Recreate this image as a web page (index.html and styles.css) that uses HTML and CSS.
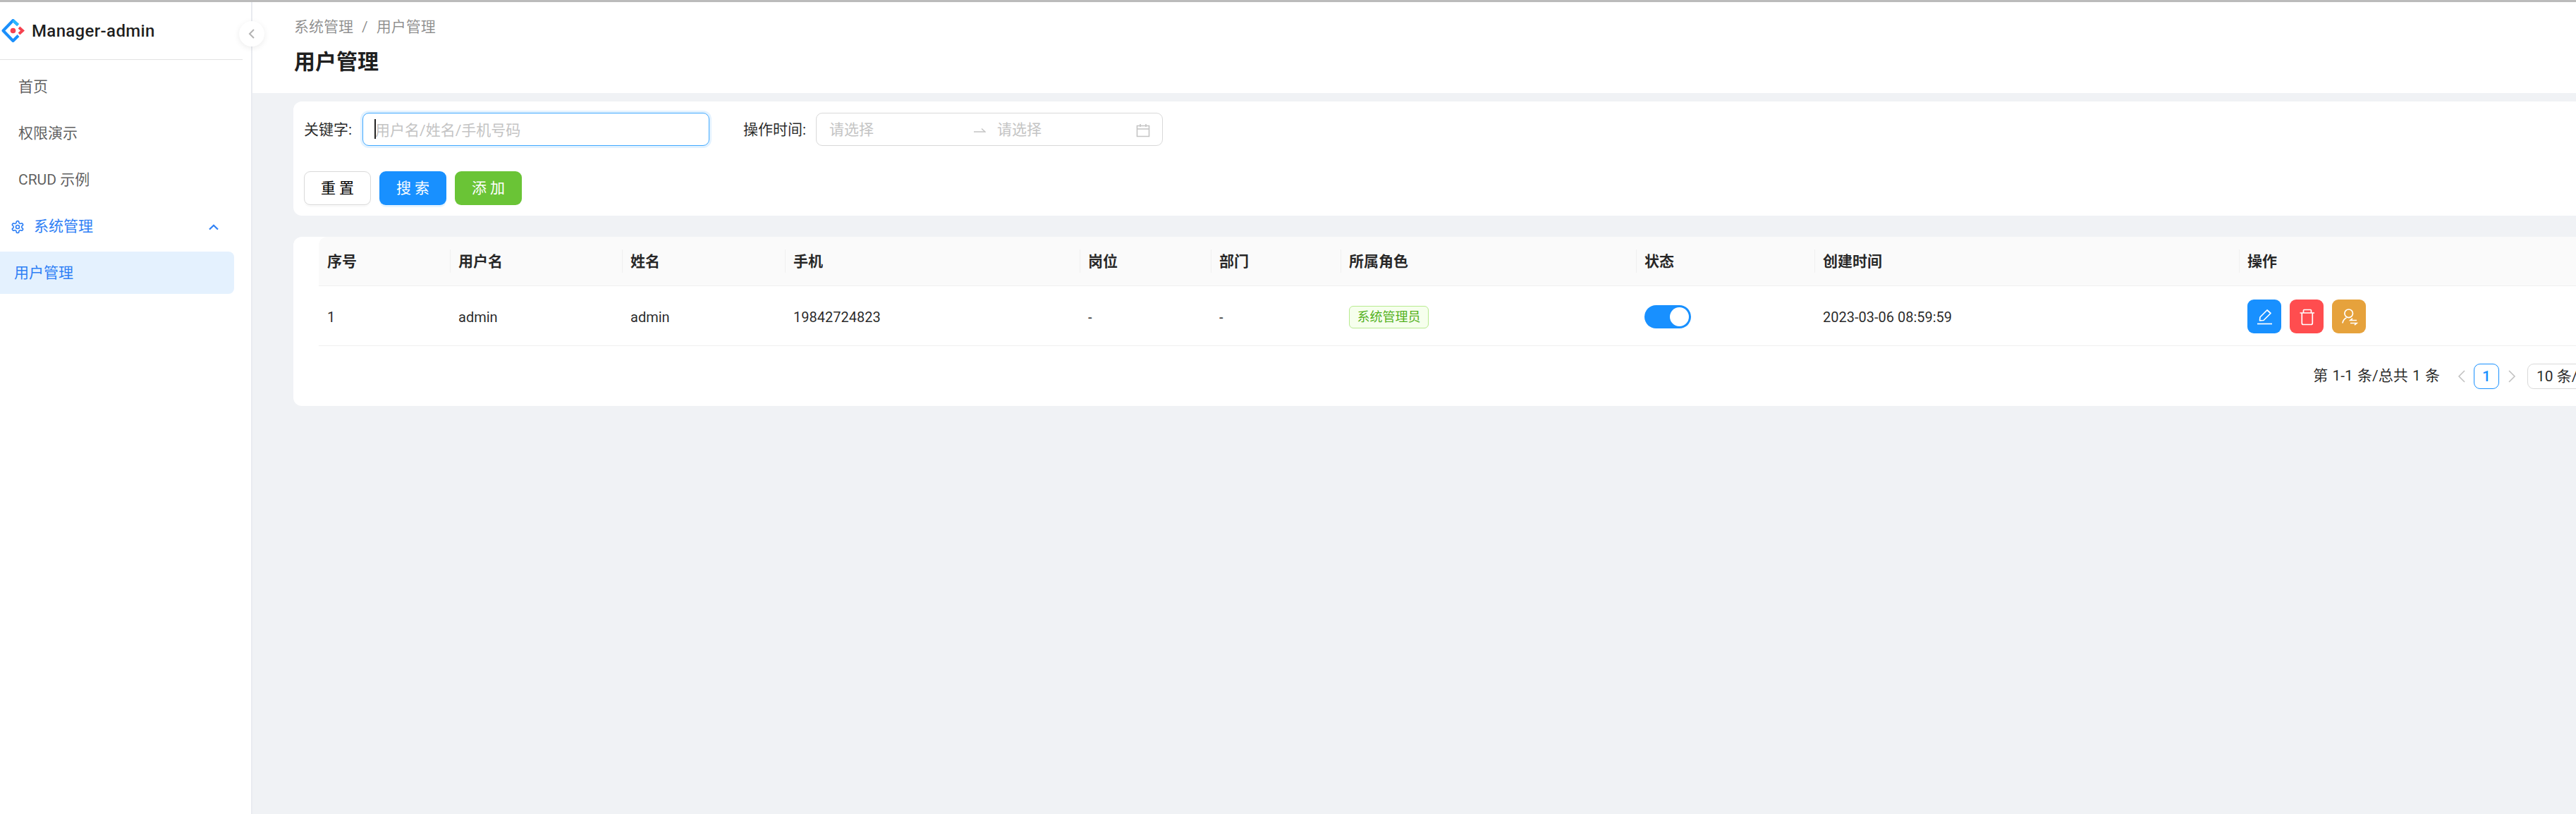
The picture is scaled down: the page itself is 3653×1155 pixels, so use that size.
FILE: index.html
```html
<!DOCTYPE html>
<html>
<head>
    <title>Manager-admin</title>
    <link rel="stylesheet" href="styles.css">
</head>
<body>
    <div class="layout">
        <aside class="sidebar">
            <div class="logo">
                <svg class="logo-icon" viewBox="0 0 33 33" fill="none">
                    <path d="M23.5 8.5 16.5 2 2.5 16.5 16.5 31 24 23.5" stroke="#1b8ffb" stroke-width="4" stroke-linejoin="round"/>
                    <path d="M16.5 2 23.5 8.5" stroke="#29b8ff" stroke-width="4"/>
                    <path d="M25 12 30 16.5 25 21" stroke="#f5414f" stroke-width="4"/>
                    <circle cx="16.5" cy="16.5" r="3.8" fill="#f5414f"/>
                </svg>
                <span class="logo-text">Manager-admin</span>
            </div>
            <nav class="menu">
                <div class="menu-item">首页</div>
                <div class="menu-item">权限演示</div>
                <div class="menu-item">CRUD 示例</div>
                <div class="menu-item menu-group">
                    <svg class="gear-icon" viewBox="0 0 24 24" fill="none" stroke="currentColor" stroke-width="2">
                        <path d="M12.22 2h-.44a2 2 0 0 0-2 2v.18a2 2 0 0 1-1 1.73l-.43.25a2 2 0 0 1-2 0l-.15-.08a2 2 0 0 0-2.73.73l-.22.38a2 2 0 0 0 .73 2.73l.15.1a2 2 0 0 1 1 1.72v.51a2 2 0 0 1-1 1.74l-.15.09a2 2 0 0 0-.73 2.73l.22.38a2 2 0 0 0 2.73.73l.15-.08a2 2 0 0 1 2 0l.43.25a2 2 0 0 1 1 1.73V20a2 2 0 0 0 2 2h.44a2 2 0 0 0 2-2v-.18a2 2 0 0 1 1-1.73l.43-.25a2 2 0 0 1 2 0l.15.08a2 2 0 0 0 2.73-.73l.22-.39a2 2 0 0 0-.73-2.73l-.15-.08a2 2 0 0 1-1-1.74v-.5a2 2 0 0 1 1-1.74l.15-.09a2 2 0 0 0 .73-2.73l-.22-.38a2 2 0 0 0-2.73-.73l-.15.08a2 2 0 0 1-2 0l-.43-.25a2 2 0 0 1-1-1.73V4a2 2 0 0 0-2-2z"/>
                        <circle cx="12" cy="12" r="3"/>
                    </svg>
                    <span class="group-title">系统管理</span>
                    <svg class="group-arrow" viewBox="0 0 14 9" fill="none" stroke="currentColor" stroke-width="2.2">
                        <path d="M1 7.5 7 1.8l6 5.7"/>
                    </svg>
                </div>
                <div class="menu-item menu-sub active">用户管理</div>
            </nav>
            <button class="collapse-btn">
                <svg viewBox="0 0 10 14" fill="none" stroke="#b3b3b3" stroke-width="2"><path d="M8 1 2 7l6 6"/></svg>
            </button>
        </aside>

        <main class="main">
            <header class="page-header">
                <div class="breadcrumb">系统管理<span class="crumb-sep">/</span>用户管理</div>
                <h1 class="page-title">用户管理</h1>
            </header>

            <div class="content">
                <section class="card filter-card">
                    <div class="filter-row">
                        <label class="filter-label">关键字:</label>
                        <div class="keyword-input">
                            <input type="text" placeholder="用户名/姓名/手机号码">
                        </div>
                        <label class="filter-label date-label">操作时间:</label>
                        <div class="date-range">
                            <span class="date-start">请选择</span>
                            <svg class="date-arrow" viewBox="0 0 17 8" fill="none" stroke="#c4c4c4" stroke-width="1.5"><path d="M0 6h16L11 1.5"/></svg>
                            <span class="date-end">请选择</span>
                            <svg class="date-icon" viewBox="0 0 20 20" fill="none" stroke="#c4c4c4" stroke-width="1.6"><path d="M1.5 3.5h17v15h-17zM1.5 8h17M6 1v4M14 1v4"/></svg>
                        </div>
                    </div>
                    <div class="button-row">
                        <button class="btn btn-default">重 置</button>
                        <button class="btn btn-primary">搜 索</button>
                        <button class="btn btn-success">添 加</button>
                    </div>
                </section>

                <section class="card table-card">
                    <table class="user-table">
                        <colgroup>
                            <col class="col-index">
                            <col class="col-username">
                            <col class="col-name">
                            <col class="col-phone">
                            <col class="col-post">
                            <col class="col-dept">
                            <col class="col-role">
                            <col class="col-status">
                            <col class="col-time">
                            <col>
                        </colgroup>
                        <thead>
                            <tr>
                                <th>序号</th>
                                <th>用户名</th>
                                <th>姓名</th>
                                <th>手机</th>
                                <th>岗位</th>
                                <th>部门</th>
                                <th>所属角色</th>
                                <th>状态</th>
                                <th>创建时间</th>
                                <th>操作</th>
                            </tr>
                        </thead>
                        <tbody>
                            <tr>
                                <td>1</td>
                                <td>admin</td>
                                <td>admin</td>
                                <td>19842724823</td>
                                <td>-</td>
                                <td>-</td>
                                <td><span class="tag">系统管理员</span></td>
                                <td><span class="switch"><span class="switch-knob"></span></span></td>
                                <td>2023-03-06 08:59:59</td>
                                <td>
                                    <div class="actions">
                                        <button class="action-btn action-edit">
                                            <svg viewBox="0 0 48 48" fill="none" stroke="#fff" stroke-width="1.7"><path d="M14 34.500h21"/><path d="M17.500 29.800 18 25 28 15l5 4.500-10 10z" stroke-linejoin="round"/></svg>
                                        </button>
                                        <button class="action-btn action-delete">
                                            <svg viewBox="0 0 48 48" fill="none" stroke="#fff" stroke-width="1.7"><path d="M14.500 19h20.500M19.500 19v-3.500q0-1 1-1h9q1 0 1 1V19M17.300 19v14.500q0 2 2 2h11q2 0 2-2V19"/></svg>
                                        </button>
                                        <button class="action-btn action-user">
                                            <svg viewBox="0 0 48 48" fill="none" stroke="#fff" stroke-width="1.7"><circle cx="23.700" cy="19.800" r="5.800"/><path d="M15 33.500c.5-3.500 2.500-6.200 5.500-7.500"/><path d="M35 29.500h-9l3-2.700M26 33.500h9l-3 2.700"/></svg>
                                        </button>
                                    </div>
                                </td>
                            </tr>
                        </tbody>
                    </table>
                    <div class="pagination">
                        <span class="page-total">第 1-1 条/总共 1 条</span>
                        <svg class="page-arrow" viewBox="0 0 11 18" fill="none" stroke="#bfbfbf" stroke-width="1.5"><path d="M10 1 2 9l8 8"/></svg>
                        <span class="page-num">1</span>
                        <svg class="page-arrow" viewBox="0 0 11 18" fill="none" stroke="#bfbfbf" stroke-width="1.5"><path d="m1 1 8 8-8 8"/></svg>
                        <span class="page-size">10 条/页</span>
                    </div>
                </section>
            </div>
        </main>
    </div>
</body>
</html>
```

FILE: styles.css
```css
* {
    box-sizing: border-box;
}

html, body {
    height: 100%;
    margin: 0;
    overflow: hidden;
}

body {
    font-family: Roboto, "Noto Sans CJK SC", sans-serif;
    font-size: 21px;
    line-height: 1.5;
    color: rgba(0, 0, 0, 0.85);
    background: #f0f2f5;
    border-top: 3px solid #bbbbbb;
}

.layout {
    display: flex;
    height: 100%;
}

/* Sidebar */
.sidebar {
    position: relative;
    flex: 0 0 358px;
    background: #fff;
    border-right: 2px solid #e9ebf0;
}

.logo {
    display: flex;
    align-items: center;
    gap: 10px;
    height: 82px;
    margin-right: 12px;
    padding: 0 2px;
    border-bottom: 1px solid #e3e3e3;
}

.logo-icon {
    width: 33px;
    height: 33px;
}

.logo-text {
    font-size: 24px;
    font-weight: 500;
    letter-spacing: 0.35px;
    color: rgba(0, 0, 0, 0.88);
}

.menu {
    display: flex;
    flex-direction: column;
    gap: 6px;
    padding: 8px 24px 0 0;
}

.menu-item {
    display: flex;
    align-items: center;
    height: 60px;
    padding: 2px 0 0 26px;
    color: rgba(0, 0, 0, 0.65);
}

.menu-group {
    padding-left: 15px;
    color: #2f80f5;
}

.gear-icon {
    width: 20px;
    height: 22px;
    margin-right: 13px;
}

.group-title {
    flex: 1;
}

.group-arrow {
    width: 14px;
    height: 9px;
    margin-right: 22px;
}

.menu-sub {
    padding-left: 20px;
}

.active {
    background: #e4f1fe;
    border-radius: 0 8px 8px 0;
    color: #2f80f5;
}

.collapse-btn {
    position: absolute;
    top: 27px;
    right: -19px;
    width: 36px;
    height: 36px;
    padding: 0;
    display: flex;
    align-items: center;
    justify-content: center;
    background: #fff;
    border: none;
    border-radius: 50%;
    box-shadow: 0 2px 8px rgba(0, 0, 0, 0.08);
}

.collapse-btn svg {
    width: 10px;
    height: 14px;
}

/* Main area */
.main {
    flex: 1;
    min-width: 0;
    overflow: hidden;
}

.page-header {
    height: 129px;
    padding: 19px 0 0 59px;
    background: #fff;
}

.breadcrumb {
    color: rgba(0, 0, 0, 0.45);
    line-height: 32px;
}

.crumb-sep {
    margin: 0 12px;
}

.page-title {
    margin: 0;
    padding-top: 11px;
    font-size: 30px;
    font-weight: 600;
    line-height: 45px;
    color: rgba(0, 0, 0, 0.88);
}

.content {
    width: 3320px;
    margin-left: 58px;
    padding-top: 12px;
}

.card {
    background: #fff;
    border-radius: 12px 0 0 12px;
}

/* Filter */
.filter-card {
    height: 162px;
    padding: 16px 15px;
    margin-bottom: 30px;
}

.filter-row {
    display: flex;
    align-items: center;
}

.filter-label {
    width: 83px;
    padding-top: 2px;
}

.date-label {
    width: 103px;
    margin-left: 48px;
}

.keyword-input {
    position: relative;
    width: 492px;
    height: 47px;
    border: 1px solid #40a9ff;
    border-radius: 9px;
    box-shadow: 0 0 0 3px rgba(24, 144, 255, 0.12);
}

/* caret of the focused field */
.keyword-input::before {
    content: "";
    position: absolute;
    top: 8px;
    left: 16px;
    width: 2px;
    height: 28px;
    background: #222;
}

.keyword-input input {
    width: 100%;
    height: 100%;
    padding: 2px 17px 0;
    border: none;
    outline: none;
    background: transparent;
    font: inherit;
}

.keyword-input input::placeholder {
    color: #c4c4c4;
}

.date-range {
    display: flex;
    align-items: center;
    width: 492px;
    height: 47px;
    padding: 2px 0 0 18px;
    border: 1px solid #d9d9d9;
    border-radius: 9px;
    color: #c4c4c4;
}

.date-start {
    width: 205px;
}

.date-end {
    width: 197px;
}

.date-arrow {
    width: 17px;
    height: 8px;
    margin-right: 16px;
}

.date-icon {
    width: 20px;
    height: 20px;
}

.button-row {
    display: flex;
    gap: 12px;
    margin-top: 36px;
}

.btn {
    width: 95px;
    height: 48px;
    padding: 2px 0 0;
    border-radius: 9px;
    font: inherit;
    border: 1px solid transparent;
}

.btn-default {
    background: #fff;
    border-color: #d9d9d9;
    box-shadow: 0 3px 0 rgba(0, 0, 0, 0.02);
}

.btn-primary {
    background: #1890ff;
    color: #fff;
    box-shadow: 0 3px 0 rgba(5, 145, 255, 0.1);
}

.btn-success {
    background: #6ac436;
    color: #fff;
}

/* Table */
.table-card {
    padding: 0 12px 24px 36px;
}

.user-table {
    width: 100%;
    table-layout: fixed;
    border-collapse: collapse;
}

.col-index { width: 186px; }
.col-username { width: 244px; }
.col-name { width: 231px; }
.col-phone { width: 418px; }
.col-post { width: 186px; }
.col-dept { width: 184px; }
.col-role { width: 419px; }
.col-status { width: 253px; }
.col-time { width: 602px; }

.user-table th {
    position: relative;
    height: 69px;
    padding: 2px 12px 0;
    background: #fafafa;
    border-bottom: 1px solid #f0f0f0;
    text-align: left;
    font-weight: 600;
}

.user-table th:first-child {
    border-top-left-radius: 12px;
}

.user-table th + th::before {
    content: "";
    position: absolute;
    top: 18px;
    left: 0;
    width: 1px;
    height: 33px;
    background: #f0f0f0;
}

.user-table td {
    height: 85px;
    padding: 4px 12px 0;
    border-bottom: 1px solid #f0f0f0;
    font-size: 20px;
}

.tag {
    display: inline-block;
    height: 32px;
    padding: 0 10.5px;
    border: 1px solid #b7eb8f;
    border-radius: 6px;
    background: #f6ffed;
    color: #52b01c;
    font-size: 18px;
    line-height: 30px;
    vertical-align: middle;
}

.switch {
    display: flex;
    justify-content: flex-end;
    align-items: center;
    width: 66px;
    height: 33px;
    padding-right: 3px;
    border-radius: 17px;
    background: #1890ff;
}

.switch-knob {
    width: 27px;
    height: 27px;
    border-radius: 50%;
    background: #fff;
}

.actions {
    display: flex;
    gap: 12px;
    margin-top: -2px;
}

.action-btn {
    width: 48px;
    height: 48px;
    padding: 0;
    border: none;
    border-radius: 9px;
}

.action-btn svg {
    display: block;
    width: 48px;
    height: 48px;
}

.action-edit { background: #1890ff; }
.action-delete { background: #ff4d4f; }
.action-user { background: #e6a23c; }

/* Pagination */
.pagination {
    display: flex;
    align-items: center;
    justify-content: flex-end;
    margin-top: 25px;
}

.page-total {
    margin-right: 25px;
    word-spacing: 1px;
}

.page-arrow {
    width: 11px;
    height: 18px;
}

.page-num {
    width: 36px;
    height: 36px;
    margin: 0 13px 0 12px;
    border: 1px solid #1890ff;
    border-radius: 9px;
    color: #1890ff;
    text-align: center;
    line-height: 34px;
    font-weight: 500;
}

.page-size {
    width: 140px;
    height: 36px;
    margin-left: 16px;
    padding-left: 12px;
    border: 1px solid #d9d9d9;
    border-radius: 9px;
    line-height: 34px;
}
```
